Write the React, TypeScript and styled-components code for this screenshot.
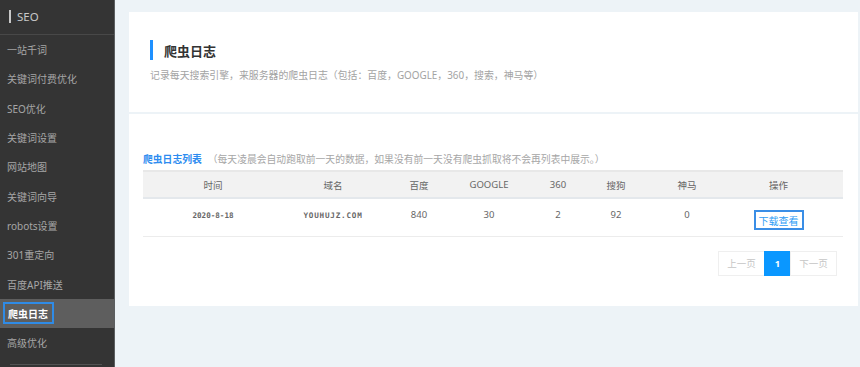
import styled, { createGlobalStyle } from 'styled-components';

const GlobalStyle = createGlobalStyle`
  * {
    box-sizing: border-box;
  }

  body {
    margin: 0;
    font-family: "Noto Sans", "Noto Sans CJK SC", sans-serif;
    background: #edf3f7;
  }
`;

const Layout = styled.div`
  display: flex;
  height: 367px;
  overflow: hidden;
`;

const Sidebar = styled.aside`
  width: 115px;
  flex-shrink: 0;
  display: flex;
  flex-direction: column;
  background: #343434;
  border-right: 1px solid #5c5f61;
`;

const SideHeader = styled.div`
  display: flex;
  align-items: center;
  gap: 6px;
  height: 35px;
  padding: 0 0 2px 9px;
  border-bottom: 1px solid #484848;
  color: #c8c8c8;
  font-size: 11.5px;

  &::before {
    content: '';
    width: 2px;
    height: 13px;
    background: #c8c8c8;
  }
`;

const SideItem = styled.div<{ $active?: boolean }>`
  display: flex;
  align-items: center;
  height: 29.3px;
  padding-left: ${(p) => (p.$active ? '3px' : '7px')};
  background: ${(p) => (p.$active ? '#5e5e5e' : 'transparent')};
  color: ${(p) => (p.$active ? '#ffffff' : '#a6a6a6')};
  font-size: 10px;
  font-weight: ${(p) => (p.$active ? 700 : 400)};

  span {
    display: flex;
    align-items: center;
    height: ${(p) => (p.$active ? '22px' : 'auto')};
    padding: ${(p) => (p.$active ? '0 4px 0 3px' : '0')};
    border: ${(p) => (p.$active ? '2px solid #2f8be6' : 'none')};
  }
`;

const SideFoot = styled.div`
  margin: auto 12px 2px 10px;
  height: 1px;
  background: #525252;
`;

const Main = styled.main`
  flex: 1;
  display: flex;
  flex-direction: column;
  gap: 2px;
  padding: 12px 2px 0 14px;
`;

const Panel = styled.section`
  background: #ffffff;
`;

const HeadPanel = styled(Panel)`
  height: 100px;
  padding: 28px 0 0 21px;
`;

const Title = styled.h1`
  display: flex;
  align-items: center;
  gap: 11px;
  margin: 0;
  height: 20px;
  color: #333;
  font-size: 13px;
  font-weight: 700;

  &::before {
    content: '';
    width: 3px;
    height: 20px;
    background: #1e90ff;
  }
`;

const Desc = styled.p`
  margin: 8px 0 0;
  color: #a3a3a3;
  font-size: 9.9px;
`;

const ListPanel = styled(Panel)`
  height: 192px;
  padding: 34px 15px 0 14px;
`;

const Caption = styled.div`
  height: 22px;
  display: flex;
  align-items: center;
  font-size: 9.8px;
  color: #a6a6a6;

  strong {
    color: #2d8cf0;
    font-weight: 700;
    margin-right: 6px;
  }
`;

const Table = styled.table`
  width: 100%;
  border-collapse: collapse;
  table-layout: fixed;
  font-size: 9.5px;
  color: #666;

  th {
    height: 27px;
    background: #f2f2f2;
    border-top: 2px solid #e8e8e8;
    border-bottom: 2px solid #e4e8ec;
    font-weight: 400;
    color: #666;
  }

  td {
    height: 38px;
    text-align: center;
    vertical-align: top;
    padding-top: 9px;
    border-bottom: 1px solid #ececec;
  }

  th:last-child,
  td:last-child {
    padding-right: 22px;
  }
`;

const Mono = styled.span<{ $wide?: boolean }>`
  font-family: "DejaVu Sans Mono", monospace;
  font-size: 7.6px;
  font-weight: 700;
  color: #666;
  letter-spacing: ${(p) => (p.$wide ? '0.8px' : '0')};
`;

const ViewButton = styled.button`
  margin-top: 2px;
  height: 20px;
  padding: 0 3px;
  border: 2px solid #3a8ee6;
  background: #fff;
  color: #2d9cf5;
  font-family: "Noto Sans CJK SC", sans-serif;
  font-size: 10px;
  cursor: pointer;
`;

const Pager = styled.div`
  display: flex;
  justify-content: flex-end;
  margin: 14px 6px 0 0;
`;

const PageBtn = styled.span<{ $current?: boolean }>`
  display: flex;
  align-items: center;
  justify-content: center;
  width: ${(p) => (p.$current ? '27px' : '47px')};
  height: 25px;
  border: 1px solid ${(p) => (p.$current ? '#0a97ff' : '#efefef')};
  margin-left: -1px;
  background: ${(p) => (p.$current ? '#0a97ff' : '#fff')};
  color: ${(p) => (p.$current ? '#fff' : '#c6c6c6')};
  font-size: 9.5px;
  font-weight: ${(p) => (p.$current ? 700 : 400)};
`;

const menu = [
  '一站千词',
  '关键词付费优化',
  'SEO优化',
  '关键词设置',
  '网站地图',
  '关键词向导',
  'robots设置',
  '301重定向',
  '百度API推送',
  '爬虫日志',
  '高级优化',
];

const columns: [string, number][] = [
  ['时间', 140],
  ['域名', 100],
  ['百度', 72],
  ['GOOGLE', 68],
  ['360', 70],
  ['搜狗', 46],
  ['神马', 96],
  ['操作', 108],
];

const App = () => (
  <>
    <GlobalStyle />
    <Layout>
      <Sidebar>
        <SideHeader>SEO</SideHeader>
        {menu.map((item) => (
          <SideItem key={item} $active={item === '爬虫日志'}>
            <span>{item}</span>
          </SideItem>
        ))}
        <SideFoot />
      </Sidebar>
      <Main>
        <HeadPanel>
          <Title>爬虫日志</Title>
          <Desc>记录每天搜索引擎，来服务器的爬虫日志（包括：百度，GOOGLE，360，搜索，神马等）</Desc>
        </HeadPanel>
        <ListPanel>
          <Caption>
            <strong>爬虫日志列表</strong>
            （每天凌晨会自动跑取前一天的数据，如果没有前一天没有爬虫抓取将不会再列表中展示。）
          </Caption>
          <Table>
            <colgroup>
              {columns.map(([name, width]) => (
                <col key={name} style={{ width }} />
              ))}
            </colgroup>
            <thead>
              <tr>
                {columns.map(([name]) => (
                  <th key={name}>{name}</th>
                ))}
              </tr>
            </thead>
            <tbody>
              <tr>
                <td>
                  <Mono>2020-8-18</Mono>
                </td>
                <td>
                  <Mono $wide>YOUHUJZ.COM</Mono>
                </td>
                <td>840</td>
                <td>30</td>
                <td>2</td>
                <td>92</td>
                <td>0</td>
                <td>
                  <ViewButton type="button">下载查看</ViewButton>
                </td>
              </tr>
            </tbody>
          </Table>
          <Pager>
            <PageBtn>上一页</PageBtn>
            <PageBtn $current>1</PageBtn>
            <PageBtn>下一页</PageBtn>
          </Pager>
        </ListPanel>
      </Main>
    </Layout>
  </>
);

export default App;
